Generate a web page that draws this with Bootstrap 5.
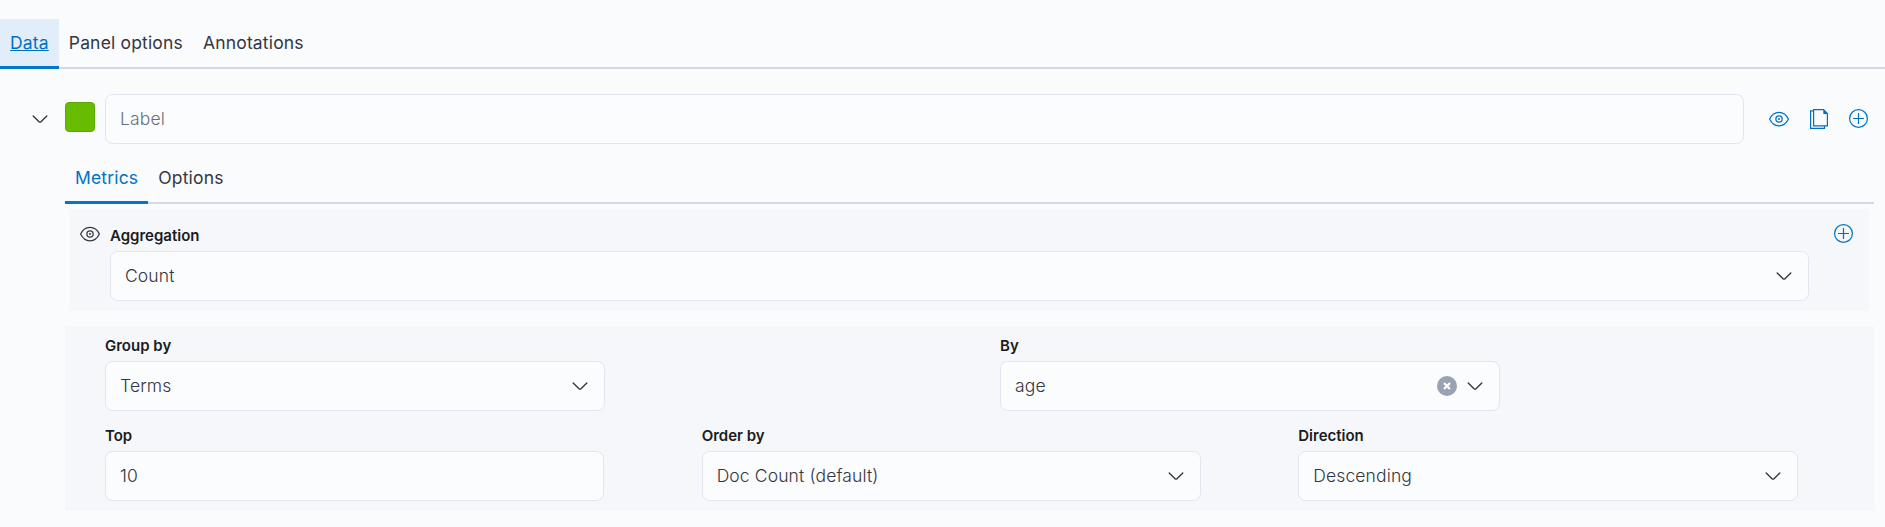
<!DOCTYPE html>
<html lang="en">
<head>
<meta charset="utf-8">
<meta name="viewport" content="width=device-width, initial-scale=1">
<title>Panel editor</title>
<link href="https://cdn.jsdelivr.net/npm/bootstrap@5.3.0/dist/css/bootstrap.min.css" rel="stylesheet">
<style>
  body { background: #fafbfd; color: #343741; font-family: Inter, sans-serif; font-size: 17.5px; line-height: 30px; overflow: hidden; }
  .editor { padding-top: 19px; }
  .tabs { height: 50px; box-shadow: inset 0 -2px 0 #d3dae6; }
  .tabs .nav-link { height: 50px; padding: 0 10px; line-height: 48px; font-size: 17.5px; letter-spacing: .17px; font-weight: 400; color: #343741; border-radius: 0; }
  .tabs .nav-link.active { color: #0071c2; box-shadow: inset 0 -3px 0 #0077cc; }
  .tabs .focused { background: #e1edf8; text-decoration: underline; }
  .series { padding: 25px 11px 0 65px; }
  .series-head { height: 50px; margin-left: -65px; padding-left: 30px; }
  .swatch { width: 30px; height: 30px; background: #68bc00; border: 1px solid #5da800; border-radius: 4px; margin: -4px 10px 0 15px; }
  .field { height: 50px; padding: 0 14px; border: 1px solid #e3e4f0; border-radius: 7.5px; background: #fbfcfe; color: #343741; font-size: 17.5px; letter-spacing: .13px; font-weight: 300; line-height: 48px; }
  input.field { padding-bottom: 2px; }
  .field::placeholder { color: #69707d; opacity: 1; }
  .field-label { display: block; font-size: 15px; font-weight: 600; line-height: 19px; color: #1a1c21; margin-bottom: 6px; }
  .tool { width: 20px; height: 20px; flex: none; display: block; }
  .blue { color: #0071c2; }
  .actions { width: 130px; padding-left: 25px; gap: 20px; flex: none; }
  .metric { background: #f5f7fb; margin: 5px 5px 0; height: 102px; padding: 10px 15px 0 10px; }
  .metric .field-label { margin-top: 7px; }
  .metric .visibility { margin: 5px 10px 0 0; }
  .metric .add { margin: 5px 0 0 25px; }
  .grouping { background: #f5f7fb; margin-top: 15px; height: 185px; padding: 10px 76.3px 0 40px; }
  .pair { gap: 395.5px; margin-right: 298px; }
  .trio { display: grid; grid-template-columns: repeat(3, 1fr); gap: 97.2px; margin-top: 15px; }
  .clear { margin-right: 8px; }
</style>
</head>
<body>
<svg class="d-none" xmlns="http://www.w3.org/2000/svg">
  <symbol id="chevron" viewBox="0 0 16 16"><path fill="currentColor" d="M13.069 5.157 8.384 9.768a.546.546 0 0 1-.768 0L2.93 5.158a.552.552 0 0 0-.771 0 .53.53 0 0 0 0 .759l4.684 4.610a1.650 1.650 0 0 0 2.312 0l4.684-4.610a.53.53 0 0 0 0-.76.552.552 0 0 0-.771 0Z"/></symbol>
  <symbol id="eye" viewBox="0 0 16 16"><g fill="none" stroke="currentColor"><path d="M.5 8C1.900 5 4.600 2.600 8 2.600S14.100 5 15.500 8C14.100 11 11.400 13.400 8 13.400S1.900 11 .5 8Z"/><circle cx="8" cy="8" r="2.500"/></g><circle cx="8" cy="8" r=".8" fill="currentColor"/></symbol>
  <symbol id="copy" viewBox="0 0 20 20"><g fill="none" stroke="currentColor" stroke-width="1.200"><path d="M4.600 .6H14.500L18.400 4.500V16.900H4.600Z"/><path d="M4.600 1.800H1.600V19.400H15.500V17"/></g><path d="M14.300 .4 18.800 5H14.300Z" fill="currentColor"/></symbol>
  <symbol id="plus" viewBox="0 0 20 20"><g fill="none" stroke="currentColor" stroke-width="1.200"><circle cx="9.500" cy="9.500" r="8.900"/><path d="M9.500 4V15M4 9.500H15"/></g></symbol>
  <symbol id="clear" viewBox="0 0 20 20"><circle cx="10" cy="10" r="10" fill="#98a2b3"/><path d="m7 7 6 6m0-6-6 6" stroke="#fff" stroke-width="2.200"/></symbol>
</svg>
<main class="editor">
  <nav class="nav tabs">
    <a class="nav-link active focused" href="#">Data</a>
    <a class="nav-link" href="#">Panel options</a>
    <a class="nav-link" href="#">Annotations</a>
  </nav>
  <section class="series">
    <div class="series-head d-flex align-items-center">
      <svg class="tool"><use href="#chevron"/></svg>
      <div class="swatch flex-shrink-0"></div>
      <input class="form-control field" type="text" placeholder="Label" aria-label="Label">
      <div class="actions d-flex align-items-center blue">
        <svg class="tool"><use href="#eye"/></svg>
        <svg class="tool"><use href="#copy"/></svg>
        <svg class="tool"><use href="#plus"/></svg>
      </div>
    </div>
    <nav class="nav tabs" style="margin-top:10px">
      <a class="nav-link active" href="#">Metrics</a>
      <a class="nav-link" href="#">Options</a>
    </nav>
    <div class="metric d-flex">
      <svg class="tool visibility"><use href="#eye"/></svg>
      <div class="flex-grow-1">
        <span class="field-label">Aggregation</span>
        <div class="field d-flex align-items-center justify-content-between">Count<svg class="tool"><use href="#chevron"/></svg></div>
      </div>
      <svg class="tool blue add"><use href="#plus"/></svg>
    </div>
    <div class="grouping">
      <div class="pair d-flex">
        <div class="flex-fill w-50">
          <span class="field-label">Group by</span>
          <div class="field d-flex align-items-center justify-content-between">Terms<svg class="tool"><use href="#chevron"/></svg></div>
        </div>
        <div class="flex-fill w-50">
          <span class="field-label">By</span>
          <div class="field d-flex align-items-center">age<svg class="tool ms-auto clear"><use href="#clear"/></svg><svg class="tool"><use href="#chevron"/></svg></div>
        </div>
      </div>
      <div class="trio">
        <div>
          <label class="field-label" for="top">Top</label>
          <input id="top" class="form-control field" type="text" value="10">
        </div>
        <div>
          <span class="field-label">Order by</span>
          <div class="field d-flex align-items-center justify-content-between">Doc Count (default)<svg class="tool"><use href="#chevron"/></svg></div>
        </div>
        <div>
          <span class="field-label">Direction</span>
          <div class="field d-flex align-items-center justify-content-between">Descending<svg class="tool"><use href="#chevron"/></svg></div>
        </div>
      </div>
    </div>
  </section>
</main>
<script src="https://cdn.jsdelivr.net/npm/bootstrap@5.3.0/dist/js/bootstrap.bundle.min.js"></script>
</body>
</html>
